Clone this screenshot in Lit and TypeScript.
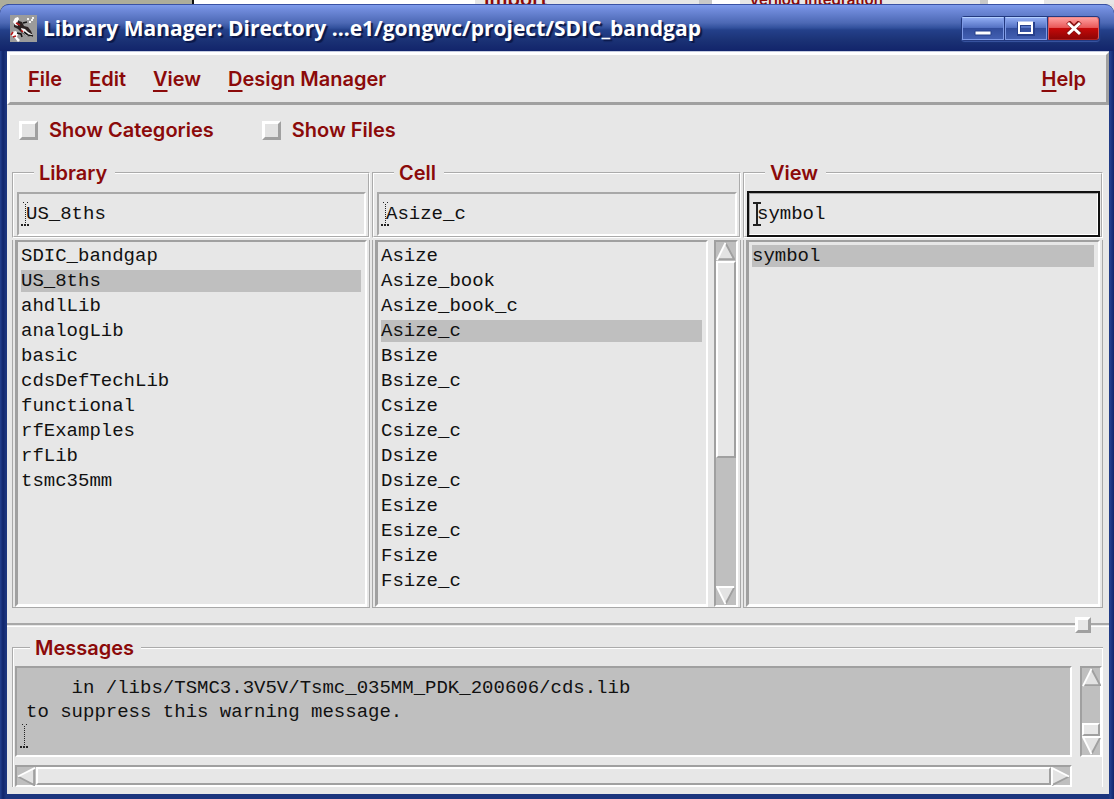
import { LitElement, html, svg, css, nothing } from "lit";
import { customElement, property, state } from "lit/decorators.js";
import { classMap } from "lit/directives/class-map.js";

type Direction = "up" | "down" | "left" | "right";

const LIBRARIES = [
  "SDIC_bandgap", "US_8ths", "ahdlLib", "analogLib", "basic",
  "cdsDefTechLib", "functional", "rfExamples", "rfLib", "tsmc35mm",
];
const CELLS = [
  "Asize", "Asize_book", "Asize_book_c", "Asize_c", "Bsize", "Bsize_c", "Csize",
  "Csize_c", "Dsize", "Dsize_c", "Esize", "Esize_c", "Fsize", "Fsize_c",
];
const VIEWS = ["symbol"];
const MESSAGE =
  "    in /libs/TSMC3.3V5V/Tsmc_035MM_PDK_200606/cds.lib\nto suppress this warning message.\n";

/* Text insertion mark: solid where the field has the focus, dotted elsewhere. */
const insertionMark = (solid: boolean) => html`
  <svg class="mark" viewBox="0 0 9 24" width="9" height="24" aria-hidden="true" shape-rendering="crispEdges">
    ${solid
      ? svg`<path d="M1 1h8M1 23h8M5 1v22" stroke="#222" stroke-width="2" fill="none"/>`
      : svg`<path d="M2.5 0v2M6.5 0v2M4.5 2v20" stroke="#222" stroke-width="1" stroke-dasharray="1 1" fill="none"/>
            <path d="M0 23h9" stroke="#222" stroke-width="2" stroke-dasharray="2 1" fill="none"/>`}
  </svg>`;

@customElement("motif-scrollbar")
class MotifScrollbar extends LitElement {
  @property() orientation: "vertical" | "horizontal" = "vertical";
  @property({ type: Number }) start = 0;
  @property({ type: Number }) size = 100;

  static styles = css`
    :host { display: flex; min-width: 0; min-height: 0; box-sizing: border-box; background: #bfbfbf;
      border: 2px solid; border-color: #a0a0a0 #fff #fff #a0a0a0; }
    :host([orientation="vertical"]) { flex-direction: column; }
    button { flex: none; width: 19px; height: 19px; padding: 0; border: 0; background: none; display: block; }
    svg { display: block; width: 100%; height: 100%; }
    .trough { flex: 1; display: flex; min-width: 0; min-height: 0; }
    :host([orientation="vertical"]) .trough { flex-direction: column; }
    .thumb { box-sizing: border-box; background: #e7e7e7; border: 2px solid; border-color: #fff #a0a0a0 #a0a0a0 #fff; }
  `;

  private arrow(direction: Direction) {
    const shapes = {
      up: { body: "10,1 19,19 1,19", light: "M1 19L10 1", dark: "M10 1L19 18H1" },
      down: { body: "1,1 19,1 10,19", light: "M10 19L1 1H19", dark: "M19 2L10 19" },
      left: { body: "1,10 19,1 19,19", light: "M1 10L19 1", dark: "M18 1V19L1 10" },
      right: { body: "1,1 19,10 1,19", light: "M1 19V1L19 10", dark: "M19 10L1 19" },
    }[direction];
    return html`<button aria-label="Scroll ${direction}">
      <svg viewBox="0 0 20 20" preserveAspectRatio="none">
        <polygon points=${shapes.body} fill="#e3e3e3"/>
        <path d=${shapes.dark} fill="none" stroke="#a0a0a0" stroke-width="2"/>
        <path d=${shapes.light} fill="none" stroke="#fff" stroke-width="2"/>
      </svg>
    </button>`;
  }

  render() {
    const vertical = this.orientation === "vertical";
    return html`
      ${this.arrow(vertical ? "up" : "left")}
      <div class="trough">
        <div style="flex: ${this.start} 1 0"></div>
        <div class="thumb" style="flex: ${this.size} 1 0"></div>
        <div style="flex: ${100 - this.start - this.size} 1 0"></div>
      </div>
      ${this.arrow(vertical ? "down" : "right")}`;
  }
}

@customElement("picker-column")
class PickerColumn extends LitElement {
  @property() heading = "";
  @property({ attribute: false }) items: string[] = [];
  @property() value = "";
  @property({ type: Boolean }) focused = false;
  @property({ type: Boolean }) scrollable = false;

  static styles = css`
    :host { display: flex; flex-direction: column; min-width: 0; min-height: 0; gap: 2px; color: #111;
      font: 19px/22px "Liberation Mono", monospace; }
    fieldset { margin: 0; min-width: 0; padding: 9px 2px 0 3px; border: 2px groove #fff; }
    legend { margin-left: 17px; padding: 0 8px 0 5px; color: #8b0a0a; font: 600 20px/20px Inter, sans-serif; }
    .field { display: flex; align-items: center; height: 44px; box-sizing: border-box; padding-left: 2px;
      border: 2px solid; border-color: #a8a8a8 #fff #fff #a8a8a8; }
    .focused .field { outline: 2px solid #111; outline-offset: -1px; }
    .mark { flex: none; }
    input { flex: 1; min-width: 0; margin-left: -4px; padding: 0; border: 0; outline: 0; background: none;
      color: inherit; font: inherit; }
    .frame { flex: 1; display: flex; min-height: 0; gap: 6px; padding: 0 2px; border: 1px solid #a8a8a8; border-top: 0; }
    ul { flex: 1; min-width: 0; margin: 0; padding: 3px 4px 0 3px; list-style: none; box-sizing: border-box;
      display: flex; flex-direction: column; gap: 3px; overflow: hidden;
      border: solid; border-width: 2px 2px 3px 3px; border-color: #a0a0a0 #fff #fff #a0a0a0; }
    li { flex: none; }
    button { display: block; width: 100%; height: 22px; padding: 0; border: 0; background: none; text-align: left;
      color: inherit; font: inherit; }
    .selected { background: #bfbfbf; }
    motif-scrollbar { width: 24px; }
  `;

  render() {
    return html`
      <fieldset class=${classMap({ focused: this.focused })}>
        <legend>${this.heading}</legend>
        <div class="field">
          ${insertionMark(this.focused)}
          <input aria-label=${this.heading} .value=${this.value} spellcheck="false">
        </div>
      </fieldset>
      <div class="frame">
        <ul aria-label="${this.heading} list">
          ${this.items.map((item) => html`<li>
            <button class=${classMap({ selected: item === this.value })}
              @click=${() => (this.value = item)}>${item}</button>
          </li>`)}
        </ul>
        ${this.scrollable
          ? html`<motif-scrollbar orientation="vertical" start="0" size="60"></motif-scrollbar>`
          : nothing}
      </div>`;
  }
}

@customElement("app-root")
class AppRoot extends LitElement {
  @state() private menus = ["File", "Edit", "View", "Design Manager"];

  static styles = css`
    :host { display: flex; flex-direction: column; min-height: 100vh; color: #8b0a0a;
      background: linear-gradient(90deg, #adad9b 50%, #e2e2e2 50%); font: 600 20px/24px Inter, sans-serif; }
    .behind { display: grid; grid-template-columns: 194fr 281fr 224fr 13fr 28fr 240fr 8fr 56fr 70fr; height: 4px;
      overflow: hidden; white-space: nowrap; line-height: 20px; }
    .behind div { display: flex; align-items: flex-end; height: 4px; background: #fff; }
    .behind .desk { background: #adad9b; border-right: 2px solid #111; }
    .behind .pane { background: #e6e6e6; padding-left: 9px; }
    .behind .groove { background: #c8c8c8; }
    .behind span { margin-bottom: -5px; }
    .behind .small { font-size: 15px; line-height: 15px; margin-bottom: -3px; }
    .window { flex: 1; display: flex; flex-direction: column; border-radius: 9px 9px 0 0; overflow: hidden;
      background: linear-gradient(90deg, #24418f 0, #10256b 3px, #1c357e 6px, #1c357e calc(100% - 5px), #24418f calc(100% - 4px), #10256b 100%); }
    .title { display: flex; align-items: center; gap: 6px; height: 47px; box-sizing: border-box; padding: 0 14px 0 10px;
      border-top: 1px solid #3a52a4; border-radius: 9px 9px 0 0;
      background: linear-gradient(#7f9cec 0, #6f8ada 5px, #4c68b4 18px, #31509c 23px, #24408a 25px, #1a3174 36px, #12246b 100%); }
    .logo { flex: none; display: block; }
    h1 { flex: 1; min-width: 0; margin: 0; overflow: hidden; white-space: nowrap; color: #fff;
      font: 700 21px/30px "Open Sans", sans-serif; text-shadow: 2px 2px 1px #0b1848; }
    .controls { display: flex; gap: 1px; padding: 1px; border-radius: 4px; background: #23397f; box-shadow: 0 1px 1px #3b57a4; }
    .controls button { display: grid; place-items: center; box-sizing: border-box; width: 42px; height: 23px; padding: 0;
      border: 1px solid #7f9be6; border-top-color: #b4d0ff; background: linear-gradient(#8fabf2, #5673c4 45%, #324d9d 50%, #4360b2); }
    .controls .close { width: 51px; border-color: #f08a8a #d65a5a #b02020; border-radius: 0 3px 3px 0;
      background: linear-gradient(#ff9c9c, #e85a5a 45%, #c40808 50%, #8e0606); }
    .controls svg { display: block; }
    .body { flex: 1; display: flex; flex-direction: column; margin: 0 5px 5px 7px; border: solid #c4cbe0; border-width: 1px 0 0;
      background: #e7e7e7; }
    nav { display: flex; align-items: center; gap: 27px; height: 53px; box-sizing: border-box; padding: 0 20px 0 18px;
      border: 3px solid; border-color: #fff #a0a0a0 #a0a0a0 #fff; }
    nav button { padding: 0; border: 0; background: none; color: inherit; font: inherit; }
    nav button:last-child { margin-left: auto; }
    u { text-decoration-thickness: 2px; text-underline-offset: 4px; text-decoration-skip-ink: none; }
    .options { display: flex; gap: 48px; padding: 13px 12px 21px; }
    .options label { display: flex; align-items: center; gap: 11px; }
    .options input { appearance: none; width: 19px; height: 19px; margin: 0; background: #e3e3e3;
      border: 3px solid; border-color: #fff #a0a0a0 #a0a0a0 #fff; }
    .options input:checked { border-color: #a0a0a0 #fff #fff #a0a0a0; }
    .columns { flex: 1; display: grid; grid-template-columns: 358fr 369fr 360fr; gap: 2px; padding: 0 6px 0 5px; }
    .sash { display: flex; align-items: center; padding: 9px 0 5px; }
    .sash span { flex: 1; height: 1px; border: solid; border-width: 2px 0 1px; border-color: #a8a8a8 transparent #fff; }
    .sash span:last-child { flex: 0 0 18px; }
    .sash button { width: 16px; height: 16px; padding: 0; background: #e7e7e7; border: 3px solid;
      border-color: #fff #a0a0a0 #a0a0a0 #fff; }
    .messages { margin: 0 6px 7px 5px; min-width: 0; padding: 8px 0 0 1px; border: 2px groove #fff; border-width: 2px 1px 0 2px;
      display: grid; grid-template-columns: minmax(0, 1fr) 22px; gap: 8px; }
    legend { margin-left: 15px; padding: 0 7px 0 5px; line-height: 20px; }
    .log { position: relative; height: 91px; }
    textarea { display: block; width: 100%; height: 100%; box-sizing: border-box; margin: 0; padding: 8px 9px 0; resize: none;
      overflow: hidden; outline: 0; border: 2px solid; border-color: #a0a0a0 #fff #fff #a0a0a0; border-radius: 0;
      background: #bfbfbf; color: #111; font: 19px/24px "Liberation Mono", monospace; white-space: pre; }
    .log .mark { position: absolute; left: 5px; bottom: 9px; }
    .across { height: 22px; }
  `;

  render() {
    return html`
      <div class="behind" aria-hidden="true">
        <div class="desk"></div><div></div>
        <div class="pane"><span>Import</span></div>
        <div class="groove"></div><div></div>
        <div class="pane"><span class="small">Verilog Integration</span></div>
        <div class="groove"></div><div></div><div class="pane"></div>
      </div>
      <div class="window">
        <header class="title">
          <svg class="logo" width="27" height="27" viewBox="0 0 27 27" aria-hidden="true">
            <rect width="27" height="27" fill="#9b9b9b"/>
            <path d="M4 8l3-5 2 3 3 1 2 4 4 1 3 4 2 5-4 1-7-4-4-4-4-2z" fill="#2a2222"/>
            <path d="M3 7l2-4 3-1 1 2-2 4 1 3-3-1z" fill="#fff"/>
            <path d="M11 13l4 1 3 3 5 3-1 2-5-1-5-4z" fill="#f4f4f4"/>
            <path d="M1 20l1-3 4-1 2 3-1 3 3 3-2 2-3-4z" fill="#fff"/>
            <path d="M1 20l2-3M6 8l4 2M3 22l3-1M11 15l2 2" stroke="#b31818" stroke-width="1.6" fill="none"/>
            <path d="M7 18l4 1 1 3M13 8l4-1M14 17l4 3 5 1" stroke="#151515" stroke-width="1.6" fill="none"/>
            <path d="M17 4h2M22 3h2M19 7h2M21 5h2" stroke="#f4f4f4" stroke-width="2"/>
          </svg>
          <h1>Library Manager: Directory ...e1/gongwc/project/SDIC_bandgap</h1>
          <div class="controls">
            <button aria-label="Minimize">
              <svg width="18" height="15" viewBox="0 0 18 15"><path d="M1 10h16v4H1z" fill="#fff" stroke="#27408c"/></svg>
            </button>
            <button aria-label="Maximize">
              <svg width="18" height="15" viewBox="0 0 18 15"><path d="M2 3h14v10H2z" fill="none" stroke="#27408c" stroke-width="4"/><path d="M2 3h13v9H2z" fill="none" stroke="#fff" stroke-width="2"/><path d="M1 2h15" stroke="#fff" stroke-width="3"/></svg>
            </button>
            <button class="close" aria-label="Close">
              <svg width="18" height="15" viewBox="0 0 18 15"><path d="M3 1l12 12M15 1L3 13" stroke="#8a1414" stroke-width="5"/><path d="M3 2l12 11M15 2L3 13" stroke="#fff" stroke-width="3"/></svg>
            </button>
          </div>
        </header>
        <main class="body">
          <nav aria-label="Main menu">
            ${this.menus.map((name) => html`<button><u>${name[0]}</u>${name.slice(1)}</button>`)}
            <button><u>H</u>elp</button>
          </nav>
          <div class="options">
            <label><input type="checkbox">Show Categories</label>
            <label><input type="checkbox">Show Files</label>
          </div>
          <div class="columns">
            <picker-column heading="Library" .items=${LIBRARIES} value="US_8ths"></picker-column>
            <picker-column heading="Cell" .items=${CELLS} value="Asize_c" scrollable></picker-column>
            <picker-column heading="View" .items=${VIEWS} value="symbol" focused></picker-column>
          </div>
          <div class="sash"><span></span><button aria-label="Resize panes"></button><span></span></div>
          <fieldset class="messages">
            <legend>Messages</legend>
            <div class="log">
              <textarea readonly aria-label="Messages" .value=${MESSAGE}></textarea>
              ${insertionMark(false)}
            </div>
            <motif-scrollbar orientation="vertical" start="80" size="20"></motif-scrollbar>
            <motif-scrollbar class="across" orientation="horizontal" start="0" size="100"></motif-scrollbar>
          </fieldset>
        </main>
      </div>`;
  }
}
